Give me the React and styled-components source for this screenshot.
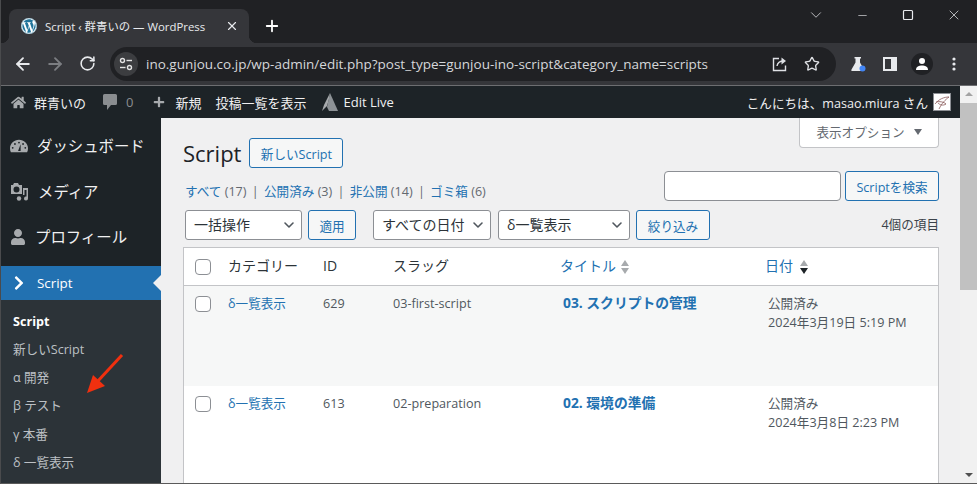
import React from "react";
import styled, { createGlobalStyle } from "styled-components";
import { FaWordpress, FaHome, FaPlus, FaUser, FaChevronRight } from "react-icons/fa";
import { ArrowLeft, ArrowRight, RotateCw, X, Plus, ChevronDown, Minus, Square, Star } from "lucide-react";

const SANS = `"Open Sans", "Noto Sans CJK JP", sans-serif`;

const Global = createGlobalStyle`
  html, body { margin: 0; padding: 0; height: 484px; overflow: hidden; background: #202124; }
  * { box-sizing: border-box; }
  body { font-family: ${SANS}; }
`;

const Frame = styled.div`
  position: relative;
  width: 977px;
  height: 484px;
  display: flex;
  flex-direction: column;
  overflow: hidden;
  border-left: 1px solid #4a4b4d;
  border-bottom: 1px solid #5a5a5a;
`;

/* browser chrome */
const TabStrip = styled.div`
  height: 43px;
  flex: none;
  background: #202124;
  display: flex;
  align-items: flex-end;
  padding-left: 8px;
`;
const Tab = styled.div`
  position: relative;
  width: 240px;
  height: 34px;
  background: #35363a;
  border-radius: 8px 8px 0 0;
  display: flex;
  align-items: center;
  padding: 0 10px 0 12px;
  color: #e8eaed;
  font-size: 11.4px;
  &::before, &::after {
    content: "";
    position: absolute;
    bottom: 0;
    width: 8px;
    height: 8px;
  }
  &::before { left: -8px; background: radial-gradient(circle at 0 0, transparent 8px, #35363a 8.5px); }
  &::after { right: -8px; background: radial-gradient(circle at 100% 0, transparent 8px, #35363a 8.5px); }
`;
const Favicon = styled.span`
  width: 16px;
  height: 16px;
  border-radius: 50%;
  background: #fff;
  display: flex;
  color: #21759b;
  margin-right: 8px;
`;
const TabTitle = styled.span`
  flex: 1;
  white-space: nowrap;
`;
const NewTab = styled.span`
  display: flex;
  color: #fff;
  margin: 0 0 8px 14px;
  align-self: flex-end;
`;
const WindowControls = styled.div`
  margin-left: auto;
  align-self: flex-start;
  display: flex;
  color: #e8eaed;
`;
const WindowButton = styled.span`
  width: 46px;
  height: 30px;
  display: flex;
  align-items: center;
  justify-content: center;
`;
const Toolbar = styled.div`
  height: 43px;
  flex: none;
  background: #35363a;
  border-bottom: 1px solid #6d6e71;
  display: flex;
  align-items: center;
  padding: 0 7px 1px 6px;
  color: #e8eaed;
`;
const NavButton = styled.span`
  width: 32px;
  display: flex;
  justify-content: center;
  color: ${(p) => (p.$off ? "#7c7e82" : "#e8eaed")};
`;
const Omnibox = styled.div`
  width: 726px;
  height: 34px;
  margin-left: 7px;
  border-radius: 17px;
  background: #202124;
  display: flex;
  align-items: center;
  padding: 0 8px 0 4px;
`;
const TuneBadge = styled.span`
  width: 24px;
  height: 24px;
  border-radius: 50%;
  background: #3c3d40;
  display: flex;
  align-items: center;
  justify-content: center;
  margin-right: 8px;
`;
const Url = styled.span`
  flex: 1;
  font-size: 13.5px;
  color: #d5d7da;
  white-space: nowrap;
`;
const OmniAction = styled.span`
  display: flex;
  width: 32px;
  justify-content: center;
  color: #dfe1e5;
`;
const ToolbarIcons = styled.div`
  display: flex;
  align-items: center;
  margin-left: 6px;
`;
const ToolIcon = styled.span`
  width: 32px;
  display: flex;
  justify-content: center;
`;
const Avatar = styled.span`
  width: 22px;
  height: 22px;
  border-radius: 50%;
  background: #202124;
  display: flex;
  align-items: center;
  justify-content: center;
`;

/* page */
const Page = styled.div`
  flex: 1;
  min-height: 0;
  display: flex;
`;
const Site = styled.div`
  flex: 1;
  min-width: 0;
  display: flex;
  flex-direction: column;
`;
const Scrollbar = styled.div`
  width: 17px;
  flex: none;
  background: #f1f1f1;
  display: flex;
  flex-direction: column;
  align-items: center;
  padding-top: 6px;
`;
const ScrollUp = styled.span`
  width: 0;
  height: 0;
  border-left: 4px solid transparent;
  border-right: 4px solid transparent;
  border-bottom: 4px solid #a3a3a3;
`;
const ScrollThumb = styled.span`
  width: 100%;
  height: 187px;
  margin-top: 7px;
  background: #c1c1c1;
`;
const ScrollDown = styled.span`
  width: 0;
  height: 0;
  margin-top: auto;
  margin-bottom: 6px;
  border-left: 4px solid transparent;
  border-right: 4px solid transparent;
  border-top: 4px solid #505050;
`;
const AdminBar = styled.div`
  height: 32px;
  flex: none;
  background: #1d2327;
  color: #f0f0f1;
  font-size: 13px;
  display: flex;
  align-items: center;
  padding: 0 9px 0 10px;
`;
const BarItem = styled.span`
  display: flex;
  align-items: center;
  gap: ${(p) => p.$gap || 7}px;
  margin-right: ${(p) => p.$after || 0}px;
  white-space: nowrap;
  svg { color: #a7aaad; flex: none; }
`;
const Muted = styled.span`
  color: #8a8d90;
`;
const Howdy = styled.span`
  margin-left: auto;
  display: flex;
  align-items: center;
  gap: 5px;
  font-size: 12.6px;
  white-space: nowrap;
`;
const BarPhoto = styled.span`
  width: 18px;
  height: 18px;
  background: #fff;
  border: 1px solid #8c8f94;
  display: flex;
`;
const Body = styled.div`
  flex: 1;
  min-height: 0;
  display: flex;
  background: #f0f0f1;
`;

/* sidebar */
const Sidebar = styled.nav`
  width: 160px;
  flex: none;
  background: #1d2327;
  padding-top: 5px;
  display: flex;
  flex-direction: column;
`;
const BigItem = styled.div`
  height: 45.5px;
  display: flex;
  align-items: center;
  padding-left: 9px;
  gap: 9px;
  color: #f0f0f1;
  font-size: 15.4px;
  white-space: nowrap;
  svg { color: #a7aaad; flex: none; }
`;
const ActiveItem = styled.div`
  position: relative;
  height: 34px;
  margin-top: 6.5px;
  background: #2271b1;
  color: #fff;
  display: flex;
  align-items: center;
  padding-left: 10px;
  gap: 10px;
  font-size: 13.4px;
  &::after {
    content: "";
    position: absolute;
    right: 0;
    top: 9px;
    border-top: 8px solid transparent;
    border-bottom: 8px solid transparent;
    border-right: 8px solid #f0f0f1;
  }
`;
const SubMenu = styled.div`
  flex: 1;
  background: #2c3338;
  padding-top: 7.5px;
  display: flex;
  flex-direction: column;
`;
const SubItem = styled.div`
  height: ${(p) => (p.$current ? 27.2 : 28.1)}px;
  display: flex;
  align-items: center;
  padding-left: 12px;
  font-size: 12.6px;
  white-space: nowrap;
  color: ${(p) => (p.$current ? "#fff" : "#bcc0c4")};
  font-weight: ${(p) => (p.$current ? 700 : 400)};
`;
const RedArrow = styled.svg`
  position: absolute;
  left: 81px;
  top: 348px;
`;

/* main content */
const Main = styled.main`
  flex: 1;
  min-width: 0;
  padding: 0 21px 0 22px;
  color: #3c434a;
  font-size: 12.6px;
`;
const Header = styled.div`
  height: 53px;
  display: flex;
  justify-content: space-between;
  align-items: flex-start;
`;
const TitleRow = styled.div`
  display: flex;
  align-items: center;
  gap: 8px;
  padding-top: 20px;
`;
const Heading = styled.h1`
  margin: 0;
  font-size: 22px;
  line-height: 30px;
  font-weight: 400;
  color: #1d2327;
`;
const OutlineButton = styled.span`
  height: 30px;
  padding: 0 10px;
  display: inline-flex;
  align-items: center;
  border: 1px solid #2271b1;
  border-radius: 3px;
  background: #f6f7f7;
  color: #2271b1;
  font-size: 12.6px;
  white-space: nowrap;
  width: ${(p) => (p.$w ? `${p.$w}px` : "auto")};
  justify-content: center;
`;
const ScreenOptions = styled.div`
  width: 140px;
  height: 30px;
  padding-bottom: 2px;
  background: #fff;
  border: 1px solid #c3c4c7;
  border-top: 0;
  border-radius: 0 0 4px 4px;
  display: flex;
  align-items: center;
  justify-content: center;
  gap: 7px;
  color: #646970;
  font-size: 12.6px;
`;
const DownTri = styled.span`
  border-left: 4px solid transparent;
  border-right: 4px solid transparent;
  border-top: 6px solid #646970;
  margin-left: 2px;
`;
const SearchRow = styled.div`
  height: 39px;
  display: flex;
  justify-content: space-between;
  align-items: flex-start;
`;
const Views = styled.div`
  padding-left: 2px;
  margin-top: 11px;
  line-height: 20px;
  color: #646970;
  white-space: nowrap;
  a { color: #2271b1; }
`;
const Sep = styled.span`
  margin: 0 2px;
`;
const SearchBox = styled.div`
  display: flex;
  gap: 4px;
`;
const SearchInput = styled.span`
  width: 177px;
  height: 30px;
  background: #fff;
  border: 1px solid #8c8f94;
  border-radius: 4px;
`;
const TableNav = styled.div`
  height: 30px;
  margin-bottom: 7px;
  padding-left: 2px;
  display: flex;
  align-items: flex-start;
`;
const Select = styled.span`
  width: ${(p) => p.$w}px;
  height: 30px;
  margin-left: ${(p) => p.$before || 0}px;
  margin-right: ${(p) => p.$after || 0}px;
  padding: 0 0 2px 8px;
  background: #fff;
  border: 1px solid #8c8f94;
  border-radius: 3px;
  color: #2c3338;
  font-size: 14px;
  display: flex;
  align-items: center;
  justify-content: space-between;
  white-space: nowrap;
  svg { margin: 2px 4px 0 0; flex: none; color: #50575e; }
`;
const Count = styled.span`
  margin-left: auto;
  align-self: center;
  margin-top: -4px;
  color: #3c434a;
`;
const Table = styled.div`
  background: #fff;
  border: 1px solid #c3c4c7;
  border-bottom: 0;
`;
const Row = styled.div`
  display: grid;
  grid-template-columns: 44px 95px 70px 168px 205px 1fr;
  height: ${(p) => (p.$head ? 38 : 100)}px;
  align-items: ${(p) => (p.$head ? "center" : "start")};
  background: ${(p) => (p.$tint ? "#f6f7f7" : "#fff")};
  border-bottom: ${(p) => (p.$head ? "1px solid #c3c4c7" : "0")};
  padding-top: ${(p) => (p.$head ? 0 : 8)}px;
`;
const Check = styled.span`
  width: 16px;
  height: 16px;
  margin-left: 11px;
  margin-top: ${(p) => p.$top || 0}px;
  background: #fff;
  border: 1px solid #8c8f94;
  border-radius: 4px;
  display: block;
`;
const HeadCell = styled.span`
  font-size: 14px;
  margin-top: -3px;
  margin-left: ${(p) => (p.$link ? -1 : 0)}px;
  color: ${(p) => (p.$link ? "#2271b1" : "#2c3338")};
  display: flex;
  align-items: center;
  gap: 5px;
  white-space: nowrap;
`;
const SortArrows = styled.span`
  display: flex;
  flex-direction: column;
  gap: 2px;
  margin-top: 3px;
  margin-left: ${(p) => p.$gap || 0}px;
`;
const ArrowUp = styled.span`
  border-left: 4px solid transparent;
  border-right: 4px solid transparent;
  border-bottom: 6px solid #a7aaad;
`;
const ArrowDown = styled.span`
  border-left: 4px solid transparent;
  border-right: 4px solid transparent;
  border-top: 6px solid ${(p) => (p.$on ? "#1d2327" : "#a7aaad")};
`;
const Cell = styled.span`
  line-height: 19px;
  white-space: nowrap;
  color: ${(p) => (p.$link ? "#2271b1" : "#50575e")};
`;
const TitleCell = styled.span`
  line-height: 19px;
  margin-top: -1px;
  font-size: 13.8px;
  font-weight: 700;
  color: #2271b1;
  white-space: nowrap;
  padding-left: 2px;
`;
const DateCell = styled.span`
  line-height: 19px;
  color: #50575e;
  padding-left: 2px;
  display: flex;
  flex-direction: column;
  white-space: nowrap;
`;

const TuneIcon = () => (
  <svg width="16" height="16" viewBox="0 0 16 16" fill="none" stroke="#e3e3e3" strokeWidth="1.4">
    <circle cx="4.5" cy="4.5" r="2" />
    <path d="M8.5 4.5H14" />
    <circle cx="11.5" cy="11.5" r="2" />
    <path d="M2 11.5H7.5" />
  </svg>
);
const ShareIcon = () => (
  <svg width="16" height="16" viewBox="0 0 16 16" fill="none" stroke="#dfe1e5" strokeWidth="1.4">
    <path d="M7 2.5H1.5V14.5H13.5V9.5" />
    <path d="M5 10C5.5 6.5 8 5 12 5" />
    <path d="M9.5 1.5L14 5L9.5 8.5" fill="#dfe1e5" stroke="none" />
  </svg>
);
const FlaskIcon = () => (
  <svg width="16" height="16" viewBox="0 0 16 16">
    <path d="M4.5 1H11V2.5H10V6.5L14 13.5C14.5 14.5 14 15 13 15H2.5C1.5 15 1 14.5 1.5 13.5L5.5 6.5V2.5H4.5Z" fill="#e8eaed" />
    <circle cx="12.5" cy="12.5" r="3" fill="#4285f4" />
  </svg>
);
const SidePanelIcon = () => (
  <svg width="14" height="14" viewBox="0 0 14 14">
    <path d="M0 0H14V14H0Z M2 2V12H8V2Z" fill="#e8eaed" fillRule="evenodd" />
  </svg>
);
const DotsIcon = () => (
  <svg width="4" height="14" viewBox="0 0 4 14" fill="#e8eaed">
    <circle cx="2" cy="2" r="1.6" />
    <circle cx="2" cy="7" r="1.6" />
    <circle cx="2" cy="12" r="1.6" />
  </svg>
);
const PersonIcon = () => (
  <svg width="14" height="14" viewBox="0 0 14 14" fill="#fff">
    <circle cx="7" cy="4" r="3" />
    <path d="M1 13C1 9.5 4 8.5 7 8.5S13 9.5 13 13Z" />
  </svg>
);
const CommentIcon = () => (
  <svg width="14" height="16" viewBox="0 0 14 16">
    <path d="M1.5 0H12.5A1.5 1.5 0 0 1 14 1.5V9.5A1.5 1.5 0 0 1 12.5 11H8L4 16V11H1.5A1.5 1.5 0 0 1 0 9.5V1.5A1.5 1.5 0 0 1 1.5 0Z" fill="#8a8d90" />
  </svg>
);
const EditLiveLogo = () => (
  <svg width="16" height="18" viewBox="0 0 16 18">
    <path d="M8 0L2 12L0 18L5 13L7 6Z" fill="#a7aaad" />
    <path d="M8 0L16 18H7L5 14Z" fill="#8d9296" />
  </svg>
);
const DashboardIcon = () => (
  <svg width="18" height="18" viewBox="0 0 20 20">
    <path
      fillRule="evenodd"
      fill="#a7aaad"
      d="M10 3C4.5 3 0 7 0 12.5C0 14.2 .4 15.7 1 17H19C19.6 15.7 20 14.2 20 12.5C20 7 15.5 3 10 3ZM10 5.2A1 1 0 1 1 10 7.2A1 1 0 1 1 10 5.2ZM5.5 6.8A1 1 0 1 1 5.5 8.8A1 1 0 1 1 5.5 6.8ZM14.5 6.8A1 1 0 1 1 14.5 8.8A1 1 0 1 1 14.5 6.8ZM3 11A1 1 0 1 1 3 13A1 1 0 1 1 3 11ZM17 11A1 1 0 1 1 17 13A1 1 0 1 1 17 11Z"
    />
    <path d="M9 15.5L11.8 8L11.8 15.5Z" fill="#1d2327" />
  </svg>
);
const MediaIcon = () => (
  <svg width="19" height="19" viewBox="0 0 19 19">
    <path
      fillRule="evenodd"
      fill="#a7aaad"
      d="M4 1H8L9 3H12V12H1V3H3ZM6.5 4.5A3 3 0 1 0 6.5 10.5A3 3 0 1 0 6.5 4.5Z"
    />
    <path d="M13 6H18V16.5A2 2 0 1 1 16.5 14.6V8H14.5V13H13Z" fill="#a7aaad" />
    <circle cx="9" cy="16.5" r="2.2" fill="#a7aaad" />
  </svg>
);
const PhotoSketch = () => (
  <svg width="16" height="16" viewBox="0 0 16 16" fill="none" stroke="#8a5a5a" strokeWidth="0.8">
    <path d="M1 10C5 5 10 3 15 3C11 6 8 9 5 15" />
    <path d="M2 8C6 7 10 8 12 10C9 12 6 11 4 9" />
  </svg>
);

const rows = [
  { id: 629, slug: "03-first-script", title: "03. スクリプトの管理", date: "2024年3月19日 5:19 PM", tint: true },
  { id: 613, slug: "02-preparation", title: "02. 環境の準備", date: "2024年3月8日 2:23 PM" },
];

const subItems = ["新しいScript", "α 開発", "β テスト", "γ 本番", "δ 一覧表示"];

export default function App() {
  return (
    <Frame>
      <Global />
      <TabStrip>
        <Tab>
          <Favicon><FaWordpress size={16} /></Favicon>
          <TabTitle>Script ‹ 群青いの — WordPress</TabTitle>
          <X size={14} strokeWidth={2} />
        </Tab>
        <NewTab><Plus size={18} strokeWidth={2.4} /></NewTab>
        <WindowControls>
          <WindowButton><ChevronDown size={18} strokeWidth={1} /></WindowButton>
          <WindowButton><Minus size={13} strokeWidth={1.2} /></WindowButton>
          <WindowButton><Square size={12} strokeWidth={1.2} absoluteStrokeWidth /></WindowButton>
          <WindowButton><X size={16} strokeWidth={1.1} /></WindowButton>
        </WindowControls>
      </TabStrip>
      <Toolbar>
        <NavButton><ArrowLeft size={20} strokeWidth={2.2} /></NavButton>
        <NavButton $off><ArrowRight size={20} strokeWidth={2.2} /></NavButton>
        <NavButton><RotateCw size={17} strokeWidth={2.2} /></NavButton>
        <Omnibox>
          <TuneBadge><TuneIcon /></TuneBadge>
          <Url>ino.gunjou.co.jp/wp-admin/edit.php?post_type=gunjou-ino-script&amp;category_name=scripts</Url>
          <OmniAction><ShareIcon /></OmniAction>
          <OmniAction><Star size={16} strokeWidth={2} /></OmniAction>
        </Omnibox>
        <ToolbarIcons>
          <ToolIcon><FlaskIcon /></ToolIcon>
          <ToolIcon><SidePanelIcon /></ToolIcon>
          <ToolIcon><Avatar><PersonIcon /></Avatar></ToolIcon>
          <ToolIcon><DotsIcon /></ToolIcon>
        </ToolbarIcons>
      </Toolbar>
      <Page>
        <Site>
          <AdminBar>
            <BarItem $after={17} $gap={8}><FaHome size={15} />群青いの</BarItem>
            <BarItem $after={20} $gap={9}><CommentIcon /><Muted>0</Muted></BarItem>
            <BarItem $after={14} $gap={10}><FaPlus size={12} />新規</BarItem>
            <BarItem $after={16}>投稿一覧を表示</BarItem>
            <BarItem $gap={5}><EditLiveLogo />Edit Live</BarItem>
            <Howdy>こんにちは、masao.miura さん <BarPhoto><PhotoSketch /></BarPhoto></Howdy>
          </AdminBar>
          <Body>
            <Sidebar>
              <BigItem><DashboardIcon />ダッシュボード</BigItem>
              <BigItem><MediaIcon />メディア</BigItem>
              <BigItem><FaUser size={16} />プロフィール</BigItem>
              <ActiveItem><FaChevronRight size={16} />Script</ActiveItem>
              <SubMenu>
                <SubItem $current>Script</SubItem>
                {subItems.map((s) => <SubItem key={s}>{s}</SubItem>)}
              </SubMenu>
            </Sidebar>
            <Main>
              <Header>
                <TitleRow>
                  <Heading>Script</Heading>
                  <OutlineButton $w={94}>新しいScript</OutlineButton>
                </TitleRow>
                <ScreenOptions>表示オプション <DownTri /></ScreenOptions>
              </Header>
              <SearchRow>
                <Views>
                  <a>すべて</a> (17) <Sep>|</Sep> <a>公開済み</a> (3) <Sep>|</Sep> <a>非公開</a> (14) <Sep>|</Sep> <a>ゴミ箱</a> (6)
                </Views>
                <SearchBox>
                  <SearchInput />
                  <OutlineButton $w={94}>Scriptを検索</OutlineButton>
                </SearchBox>
              </SearchRow>
              <TableNav>
                <Select $w={117} $after={6}>一括操作<ChevronDown size={16} strokeWidth={2.4} /></Select>
                <OutlineButton $w={48}>適用</OutlineButton>
                <Select $w={118} $before={17} $after={7}>すべての日付<ChevronDown size={16} strokeWidth={2.4} /></Select>
                <Select $w={132} $after={6}>δ一覧表示<ChevronDown size={16} strokeWidth={2.4} /></Select>
                <OutlineButton $w={74}>絞り込み</OutlineButton>
                <Count>4個の項目</Count>
              </TableNav>
              <Table>
                <Row $head>
                  <Check />
                  <HeadCell>カテゴリー</HeadCell>
                  <HeadCell>ID</HeadCell>
                  <HeadCell>スラッグ</HeadCell>
                  <HeadCell $link>タイトル <SortArrows><ArrowUp /><ArrowDown /></SortArrows></HeadCell>
                  <HeadCell $link>日付 <SortArrows $gap={2}><ArrowUp /><ArrowDown $on /></SortArrows></HeadCell>
                </Row>
                {rows.map((r) => (
                  <Row key={r.id} $tint={r.tint}>
                    <Check $top={2} />
                    <Cell $link>δ一覧表示</Cell>
                    <Cell>{r.id}</Cell>
                    <Cell>{r.slug}</Cell>
                    <TitleCell>{r.title}</TitleCell>
                    <DateCell><span>公開済み</span><span>{r.date}</span></DateCell>
                  </Row>
                ))}
              </Table>
            </Main>
          </Body>
        </Site>
        <Scrollbar>
          <ScrollUp />
          <ScrollThumb />
          <ScrollDown />
        </Scrollbar>
      </Page>
      <RedArrow width="50" height="52" viewBox="0 0 50 52">
        <path d="M40 7L15 34" stroke="#f0300f" strokeWidth="3" />
        <path d="M5 45L11 27L23 38Z" fill="#f0300f" />
      </RedArrow>
    </Frame>
  );
}
